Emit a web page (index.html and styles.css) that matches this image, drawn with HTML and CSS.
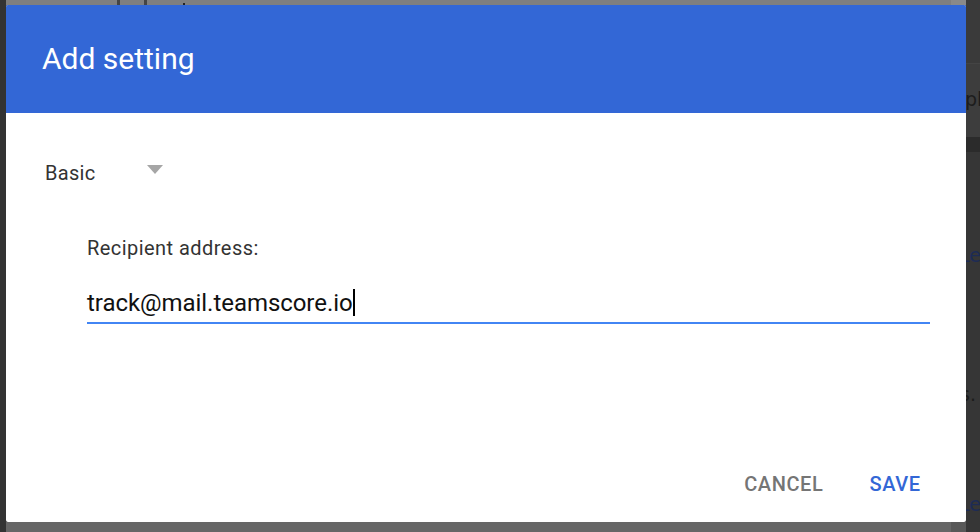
FILE: index.html
```html
<!DOCTYPE html>
<html lang="en">
<head>
<meta charset="utf-8">
<title>Add setting</title>
<link rel="stylesheet" href="styles.css">
</head>
<body>
<div class="page">
  <div class="side-left"></div>
  <div class="center">
    <div class="top-strip">
      <span class="mark mark-a"></span>
      <span class="mark mark-b"></span>
      <span class="mark mark-c"></span>
      <span class="top-end"></span>
    </div>
    <div class="dialog">
      <div class="dialog-header">
        <h1 class="dialog-title">Add setting</h1>
      </div>
      <div class="dialog-body">
        <div class="select-row">
          <span class="select-value">Basic</span>
          <span class="select-arrow"></span>
        </div>
        <div class="field">
          <label class="field-label">Recipient address:</label>
          <div class="field-input"><span class="input-text">track@mail.teamscore.io</span><span class="caret"></span></div>
        </div>
      </div>
      <div class="dialog-actions">
        <button class="btn btn-cancel">Cancel</button>
        <button class="btn btn-save">Save</button>
      </div>
    </div>
    <div class="bottom-strip"><span class="bottom-end"></span></div>
  </div>
  <div class="side-right">
    <div class="band band-1"></div>
    <div class="band band-2"><span class="peek">pl</span></div>
    <div class="band band-3"></div>
    <div class="band band-4">
      <span class="peek peek-link peek-le1">Le</span>
      <span class="peek peek-s">s.</span>
      <span class="peek peek-link peek-le2">Le</span>
    </div>
  </div>
</div>
</body>
</html>
```
FILE: styles.css
```css
* { box-sizing: border-box; }
html, body { margin: 0; padding: 0; }
body {
  width: 980px;
  height: 532px;
  overflow: hidden;
  font-family: Roboto, "Liberation Sans", sans-serif;
  background: #333;
}
.page {
  display: flex;
  width: 980px;
  height: 532px;
}
.side-left {
  width: 6px;
  background: #333;
}
.center {
  width: 960px;
  display: flex;
  flex-direction: column;
}
.top-strip {
  height: 5px;
  background: #7f7f7f;
  display: flex;
}
.mark { height: 5px; background: #444; }
.mark-a { width: 3px; margin-left: 111px; }
.mark-b { width: 3px; margin-left: 24px; }
.mark-c { width: 2px; height: 2px; margin-left: 36px; margin-top: 3px; background: #222; }
.top-end { margin-left: auto; width: 15px; background: #898989; }

.dialog {
  height: 517px;
  background: #fff;
  border-radius: 2px;
  display: flex;
  flex-direction: column;
  overflow: hidden;
}
.dialog-header {
  height: 108px;
  background: #3367d6;
  padding: 36px 36px 0;
}
.dialog-title {
  margin: 0;
  font-size: 30px;
  line-height: 36px;
  font-weight: 400;
  color: #fff;
}
.dialog-body {
  flex: 1;
  padding: 0 36px 0 39px;
}
.select-row {
  display: flex;
  align-items: flex-start;
  margin-top: 46px;
  height: 26px;
}
.select-value {
  font-size: 20px;
  line-height: 28px;
  letter-spacing: 0.3px;
  color: #333;
  width: 102px;
}
.select-arrow {
  width: 0;
  height: 0;
  border-left: 8.5px solid transparent;
  border-right: 8.5px solid transparent;
  border-top: 9px solid #a6a6a6;
  margin-top: 6px;
}
.field {
  margin-left: 42px;
  margin-top: 51px;
  width: 843px;
}
.field-label {
  display: block;
  font-size: 20px;
  line-height: 24px;
  letter-spacing: 0.45px;
  color: #333;
}
.field-input {
  margin-top: 29px;
  height: 35px;
  border-bottom: 2px solid #4285f4;
  display: flex;
  align-items: flex-start;
}
.input-text {
  font-size: 24px;
  line-height: 28px;
  letter-spacing: -0.05px;
  color: #111;
}
.caret {
  width: 2px;
  height: 27px;
  background: #000;
  margin-left: 0;
}
.dialog-actions {
  display: flex;
  justify-content: flex-end;
  align-items: center;
  gap: 46px;
  padding: 0 46px 6px 0;
  height: 70px;
}
.btn {
  border: 0;
  background: none;
  padding: 0;
  font-family: Roboto, "Liberation Sans", sans-serif;
  font-size: 20px;
  font-weight: 500;
  text-transform: uppercase;
  line-height: 24px;
  letter-spacing: 0.6px;
}
.btn-cancel { color: #757575; }
.btn-save { color: #3367d6; margin-right: -0.6px; }

.bottom-strip {
  flex: 1;
  background: #666;
  display: flex;
}
.bottom-end { margin-left: auto; width: 15px; background: #585858; }

.side-right {
  width: 14px;
  display: flex;
  flex-direction: column;
  overflow: hidden;
}
.band { position: relative; overflow: hidden; }
.band-1 { height: 64px; background: #3a3a3a; border-bottom: 1px solid #444; }
.band-2 { height: 73px; background: #3d3d3d; }
.band-3 { height: 15px; background: #2b2b2b; }
.band-4 { flex: 1; background: #363636; }
.peek {
  position: absolute;
  font-family: "DejaVu Sans", sans-serif;
  font-size: 19px;
  color: #1c1c1c;
  line-height: 20px;
  white-space: nowrap;
}
.band-2 .peek { left: -1px; top: 25px; }
.peek-link { color: #1d2b55; }
.peek-le1 { left: -7px; top: 93px; }
.peek-s { left: -6px; top: 232px; }
.peek-le2 { left: -7px; top: 342px; }
```
